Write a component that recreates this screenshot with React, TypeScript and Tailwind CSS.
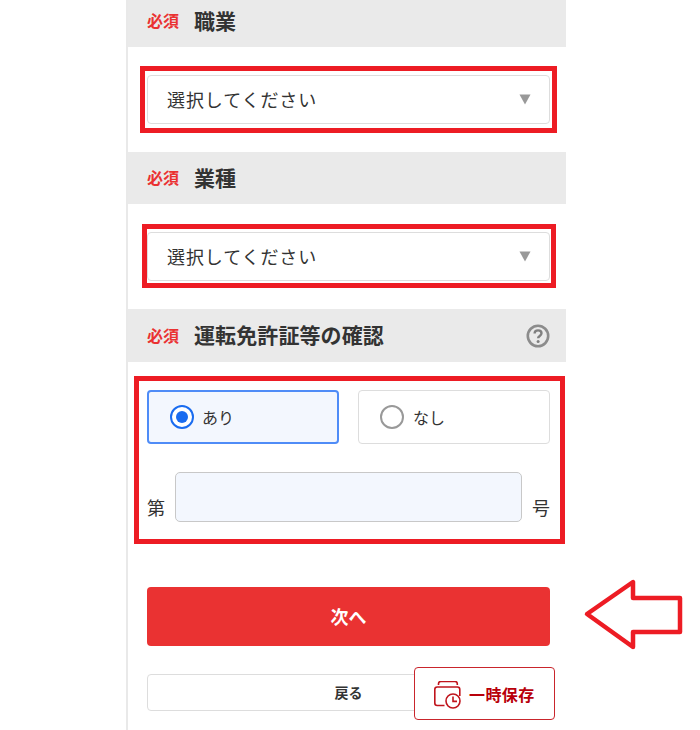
import React from "react";

function Header({ title, h, help, pad }: { title: string; h: string; help?: boolean; pad?: string }) {
  return (
    <div className={`flex items-center bg-[#eaeaea] pl-[19px] pr-[16px] ${h} ${pad ?? ""}`}>
      <span className="mb-[2px] w-[47px] text-[16px] font-bold text-[#ea3232]">必須</span>
      <span className="mb-[1px] text-[21px] font-bold tracking-[0.1px] text-[#333333]">{title}</span>
      {help && (
        <svg className="ml-auto" width="24" height="24" viewBox="0 0 24 24" fill="none">
          <circle cx="12" cy="12" r="10.2" stroke="#8c8c8c" strokeWidth="2.6" />
          <path d="M8.6 9.6c0-2 1.5-3.2 3.5-3.2s3.4 1.2 3.4 2.9c0 2.6-3.4 2.6-3.4 5" stroke="#808080" strokeWidth="2.4" fill="none" />
          <circle cx="12.1" cy="17.6" r="1.5" fill="#808080" />
        </svg>
      )}
    </div>
  );
}

function SelectBox() {
  return (
    <div className="flex h-[49px] items-center justify-between rounded-[4px] border border-[#dddddd] bg-white pl-[19px] pr-[18px]">
      <span className="text-[18px] tracking-[0.9px] text-[#333333]">選択してください</span>
      <svg className="mb-[1px]" width="12" height="11" viewBox="0 0 12 11"><path d="M0.5 0.5h11L6 10.5z" fill="#999999" /></svg>
    </div>
  );
}

export default function App() {
  return (
    <div className="relative h-[730px] w-[700px] overflow-hidden bg-white font-['Noto_Sans_CJK_JP','Noto_Sans',sans-serif]">
      <div className="ml-[126px] h-[730px] w-[440px] border-l-2 border-[#e9e9e9]">
        <Header title="職業" h="h-[47px]" pad="pb-[5px]" />
        <div className="pb-[28px] pl-[19px] pr-[16px] pt-[28px]"><SelectBox /></div>
        <Header title="業種" h="h-[52px]" />
        <div className="pb-[28px] pl-[19px] pr-[16px] pt-[28px]"><SelectBox /></div>
        <Header title="運転免許証等の確認" h="h-[53px]" help />
        <div className="pl-[19px] pr-[16px] pt-[28px]">
          <div className="flex gap-[19px]">
            <div className="flex h-[54px] w-[192px] items-center rounded-[4px] border-2 border-[#4f8cf7] bg-[#f3f7fe] pl-[21px]">
              <span className="flex h-[24px] w-[24px] items-center justify-center rounded-full border-2 border-[#1a6cf0] bg-white">
                <span className="h-[12px] w-[12px] rounded-full bg-[#1a6cf0]" />
              </span>
              <span className="ml-[8px] text-[16px] text-[#333333]">あり</span>
            </div>
            <div className="flex h-[54px] w-[192px] items-center rounded-[4px] border border-[#dddddd] bg-white pl-[21px]">
              <span className="h-[24px] w-[24px] rounded-full border-2 border-[#999999] bg-white" />
              <span className="ml-[9px] text-[16px] text-[#333333]">なし</span>
            </div>
          </div>
          <div className="mt-[28px] flex items-end justify-between">
            <span className="pb-[1px] text-[18px] text-[#333333]">第</span>
            <div className="h-[50px] w-[347px] rounded-[5px] border border-[#c8c8c8] bg-[#f3f7fe]" />
            <span className="pb-[1px] text-[18px] text-[#333333]">号</span>
          </div>
          <button className="mt-[65px] flex h-[59px] w-full items-center justify-center rounded-[4px] bg-[#ea3232] text-[18px] font-bold text-white">次へ</button>
          <button className="mt-[28px] flex h-[37px] w-full items-center justify-center rounded-[4px] border border-[#dddddd] bg-white text-[14px] font-bold text-[#333333]">戻る</button>
        </div>
      </div>

      <div className="absolute left-[414px] top-[667px] flex h-[53px] w-[141px] items-center gap-[7px] rounded-[4px] border border-[#c9252c] bg-white pl-[19px]">
        <svg className="mt-[2px]" width="28" height="28" viewBox="0 0 28 28" fill="none" stroke="#c0141c" strokeWidth="1.6">
          <path d="M4.5 4V2.8c0-1.3 1-2.3 2.3-2.3h14.2c1.3 0 2.3 1 2.3 2.3V4" />
          <path d="M10.5 24.5H3.2C1.7 24.5.8 23.5.8 22V8.5C.8 7 1.7 6 3.2 6h20.2c1.5 0 2.4 1 2.4 2.5V15" />
          <circle cx="19" cy="20" r="7" fill="#ffffff" />
          <path d="M19 15.5V20.4h4" />
        </svg>
        <span className="text-[16px] font-bold tracking-[0.4px] text-[#b8000a]">一時保存</span>
      </div>

      <div className="pointer-events-none absolute left-[140px] top-[66px] h-[67px] w-[417px] border-[5px] border-[#ed1c24]" />
      <div className="pointer-events-none absolute left-[142px] top-[224px] h-[64px] w-[414px] border-[5px] border-[#ed1c24]" />
      <div className="pointer-events-none absolute left-[134px] top-[376px] h-[168px] w-[431px] border-[5px] border-[#ed1c24]" />

      <svg className="absolute left-[580px] top-[575px]" width="105" height="80" viewBox="0 0 105 80" fill="none">
        <path d="M7 39 53 7v16h47v34H53v15z" stroke="#ed1c24" strokeWidth="4.5" strokeLinejoin="round" />
      </svg>
    </div>
  );
}
